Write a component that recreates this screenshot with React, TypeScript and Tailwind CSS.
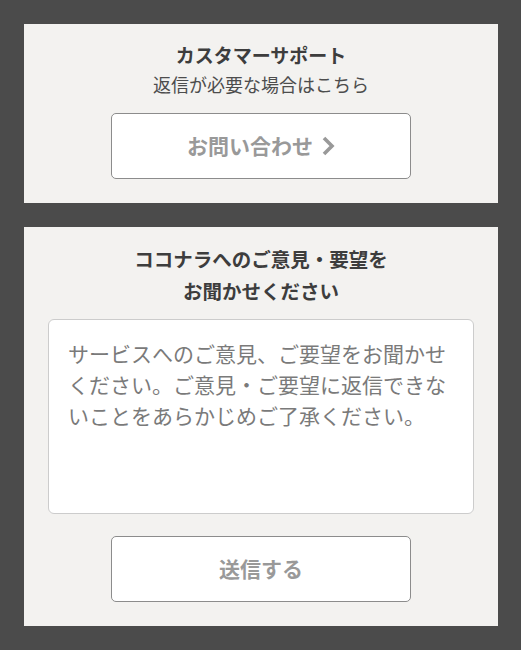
import React from 'react';

function ChevronRight() {
  return (
    <svg width="14" height="22" viewBox="0 0 14 22" className="ml-[8px]">
      <polyline points="3,3 11,11 3,19" fill="none" stroke="#999999" strokeWidth="3.6" />
    </svg>
  );
}

export default function App() {
  return (
    <div
      className="min-h-[650px] w-full bg-[#4b4b4b] pl-[24px] pr-[23px] py-[24px] flex flex-col gap-[24px]"
      style={{ fontFamily: '"Noto Sans CJK JP", "Noto Sans", sans-serif' }}
    >
      {/* Customer support */}
      <div className="bg-[#f3f2f0] pt-[16px] pb-[24px] flex flex-col items-center">
        <h2 className="text-[19px] leading-[29px] font-bold text-[#3d3d3d]">
          カスタマーサポート
        </h2>
        <p className="text-[18px] leading-[31px] text-[#4d4d4d]">
          返信が必要な場合はこちら
        </p>
        <button className="mt-[13px] w-[300px] h-[66px] bg-white border border-[#8c8c8c] rounded-[5px] flex items-center justify-center text-[21px] font-bold text-[#999999]">
          お問い合わせ
          <ChevronRight />
        </button>
      </div>

      {/* Feedback */}
      <div className="bg-[#f3f2f0] pt-[16px] pb-[24px] px-[24px] flex flex-col items-center">
        <h2 className="text-[19.5px] leading-[32px] font-bold text-[#3d3d3d] text-center">
          ココナラへのご意見・要望を
          <br />
          お聞かせください
        </h2>
        <textarea
          className="mt-[12px] w-full h-[195px] bg-white border border-[#cccccc] rounded-[6px] pt-[18px] pl-[19px] pr-[19px] text-[21px] leading-[31px] text-[#333333] placeholder:text-[#7a7a7a] resize-none outline-none"
          placeholder="サービスへのご意見、ご要望をお聞かせください。ご意見・ご要望に返信できないことをあらかじめご了承ください。"
        />
        <button className="mt-[22px] w-[300px] h-[66px] bg-white border border-[#8c8c8c] rounded-[5px] flex items-center justify-center text-[21px] font-bold text-[#999999]">
          送信する
        </button>
      </div>
    </div>
  );
}
